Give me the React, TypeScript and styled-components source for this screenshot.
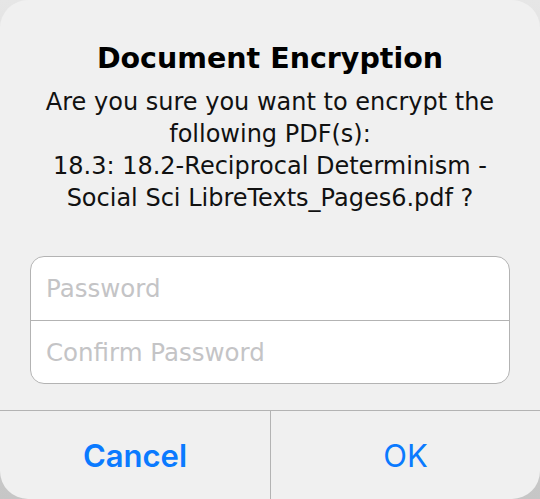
import styled, { createGlobalStyle } from "styled-components";

const GlobalStyle = createGlobalStyle`
  html, body {
    margin: 0;
    padding: 0;
    background: linear-gradient(#e6e6e6, #c6c6c6);
    font-family: "DejaVu Sans", Inter, sans-serif;
  }
  * { box-sizing: border-box; }
`;

const Alert = styled.div`
  width: 540px;
  height: 499px;
  background-color: #f0f0f0;
  border-radius: 28px;
  overflow: hidden;
  display: flex;
  flex-direction: column;
`;

const Body = styled.div`
  flex: 1;
  display: flex;
  flex-direction: column;
  align-items: center;
  padding-top: 41px;
`;

const Title = styled.h2`
  margin: 0;
  font-family: "DejaVu Sans", sans-serif;
  font-size: 28.5px;
  line-height: 36px;
  font-weight: 700;
  color: #000;
  text-align: center;
`;

const Message = styled.p`
  margin: 9px 0 0;
  font-family: "DejaVu Sans", sans-serif;
  font-size: 24px;
  line-height: 32px;
  font-weight: 400;
  color: #111;
  text-align: center;
  span {
    display: block;
    white-space: nowrap;
  }
`;

const Fields = styled.div`
  align-self: stretch;
  margin: 42px 30px 0;
  background-color: #fff;
  border: 1px solid #b3b3b3;
  border-radius: 14px;
  overflow: hidden;
`;

const Field = styled.input<{ divided?: boolean }>`
  display: block;
  width: 100%;
  height: ${p => (p.divided ? "64px" : "62px")};
  border: none;
  border-bottom: ${p => (p.divided ? "1px solid #b3b3b3" : "none")};
  outline: none;
  background: transparent;
  padding: 0 15px;
  font-family: "DejaVu Sans", sans-serif;
  font-size: 24.5px;
  color: #000;
  &::placeholder {
    color: #c4c4c6;
  }
`;

const Actions = styled.div`
  display: grid;
  grid-template-columns: 1fr 1fr;
  height: 89px;
  border-top: 1px solid #b3b3b3;
`;

const Action = styled.button<{ primary?: boolean }>`
  border: none;
  background: transparent;
  font-family: Inter, "Liberation Sans", sans-serif;
  font-size: 31px;
  font-weight: ${p => (p.primary ? 600 : 400)};
  color: #0a7aff;
  padding: 0;
  & + & {
    border-left: 1px solid #b3b3b3;
  }
`;

export default function App() {
  return (
    <>
      <GlobalStyle />
      <Alert>
        <Body>
          <Title>Document Encryption</Title>
          <Message>
            <span>Are you sure you want to encrypt the</span>
            <span>following PDF(s):</span>
            <span>18.3: 18.2-Reciprocal Determinism -</span>
            <span>Social Sci LibreTexts_Pages6.pdf ?</span>
          </Message>
          <Fields>
            <Field divided placeholder="Password" type="password" />
            <Field placeholder="Confirm Password" type="password" />
          </Fields>
        </Body>
        <Actions>
          <Action primary>Cancel</Action>
          <Action>OK</Action>
        </Actions>
      </Alert>
    </>
  );
}
